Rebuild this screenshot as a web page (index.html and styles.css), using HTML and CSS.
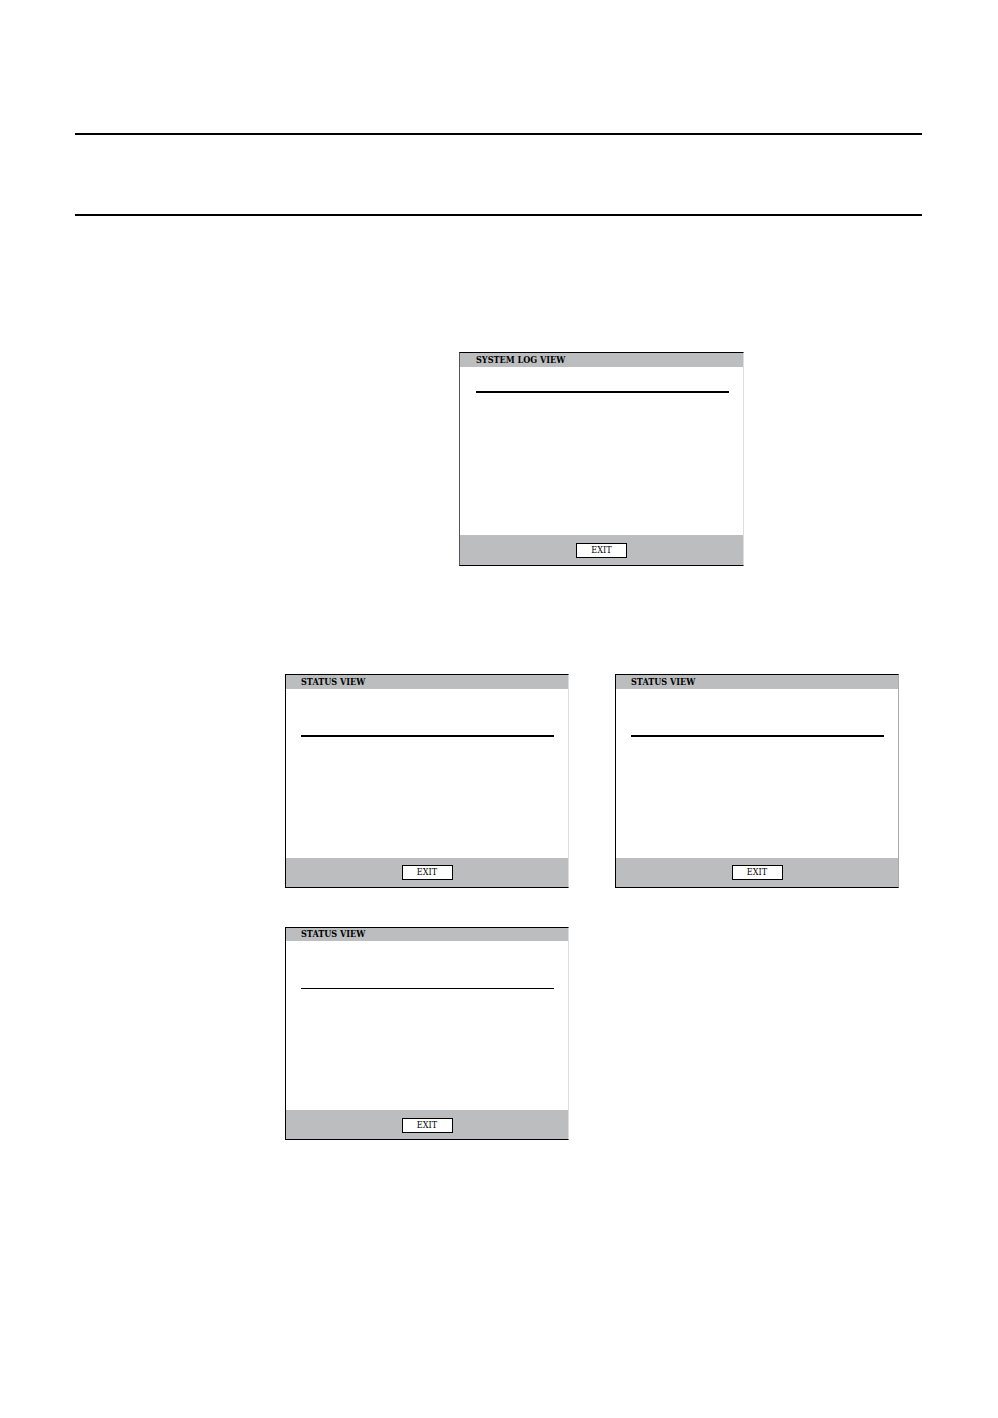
FILE: index.html
```html
<!DOCTYPE html>
<html lang="en">
<head>
<meta charset="utf-8">
<title>System Log View and Status View</title>
<link rel="stylesheet" href="styles.css">
</head>
<body>
<header class="page-header"></header>
<main class="content">
  <div class="log-row">
    <section class="screen screen-log">
      <h2 class="screen-title">SYSTEM LOG VIEW</h2>
      <div class="screen-body"><hr class="rule"></div>
      <footer class="screen-footer"><button class="exit" type="button">EXIT</button></footer>
    </section>
  </div>
  <div class="status-grid">
    <section class="screen">
      <h2 class="screen-title">STATUS VIEW</h2>
      <div class="screen-body"><hr class="rule"></div>
      <footer class="screen-footer"><button class="exit" type="button">EXIT</button></footer>
    </section>
    <section class="screen screen-shaded">
      <h2 class="screen-title">STATUS VIEW</h2>
      <div class="screen-body"><hr class="rule"></div>
      <footer class="screen-footer"><button class="exit" type="button">EXIT</button></footer>
    </section>
    <section class="screen screen-fine">
      <h2 class="screen-title">STATUS VIEW</h2>
      <div class="screen-body"><hr class="rule"></div>
      <footer class="screen-footer"><button class="exit" type="button">EXIT</button></footer>
    </section>
  </div>
</main>
</body>
</html>
```

FILE: styles.css
```css
* {
  box-sizing: border-box;
}

body {
  margin: 0;
  padding: 133px 76px 278px 75px;
  background: #fff;
  color: #000;
  font-family: "DejaVu Serif Condensed", "DejaVu Serif", serif;
  font-size: 9px;
}

.page-header {
  height: 83px;
  border-top: 2px solid #000;
  border-bottom: 2px solid #000;
}

.content {
  padding: 136px 23px 0 210px;
}

.log-row,
.status-grid {
  display: grid;
  grid-template-columns: 1fr 1fr;
  column-gap: 46px;
}

.log-row {
  padding-left: 174px;
  grid-template-columns: minmax(0, 285px);
  margin-bottom: 108px;
}

.status-grid {
  row-gap: 39px;
}

.screen {
  display: flex;
  flex-direction: column;
  border: 1px solid #000;
  border-right-color: #ddd;
}

.screen-log {
  border-left-color: #555;
}

.screen-shaded {
  border-right-color: #aaa;
}

.screen-title {
  margin: 0;
  padding-left: 15px;
  background: #bbbdbe;
  font-size: 9px;
  font-weight: bold;
  line-height: 14px;
}

.screen-body {
  height: 169px;
  padding: 46px 14px 0 15px;
}

.screen-log .screen-title {
  padding-left: 16px;
}

.screen-log .screen-body {
  height: 168px;
  padding-top: 24px;
  padding-left: 16px;
}

.rule {
  margin: 0;
  border: 0;
  border-top: 2px solid #000;
}

.screen-footer {
  display: flex;
  justify-content: center;
  padding: 7px 0;
  background: #bbbdbe;
}

.screen-log .screen-footer {
  padding-top: 8px;
}

.exit {
  width: 51px;
  height: 15px;
  padding: 0;
  border: 1px solid #000;
  border-radius: 0;
  background: #fff;
  color: #000;
  font-family: inherit;
  font-size: 9px;
  line-height: 13px;
}

.screen-fine .screen-title {
  line-height: 13px;
}

.screen-fine .screen-body {
  padding-top: 47px;
}

.screen-fine .rule {
  border-top-width: 1px;
}

.screen-fine .screen-footer {
  padding-top: 8px;
  padding-bottom: 6px;
}
```
